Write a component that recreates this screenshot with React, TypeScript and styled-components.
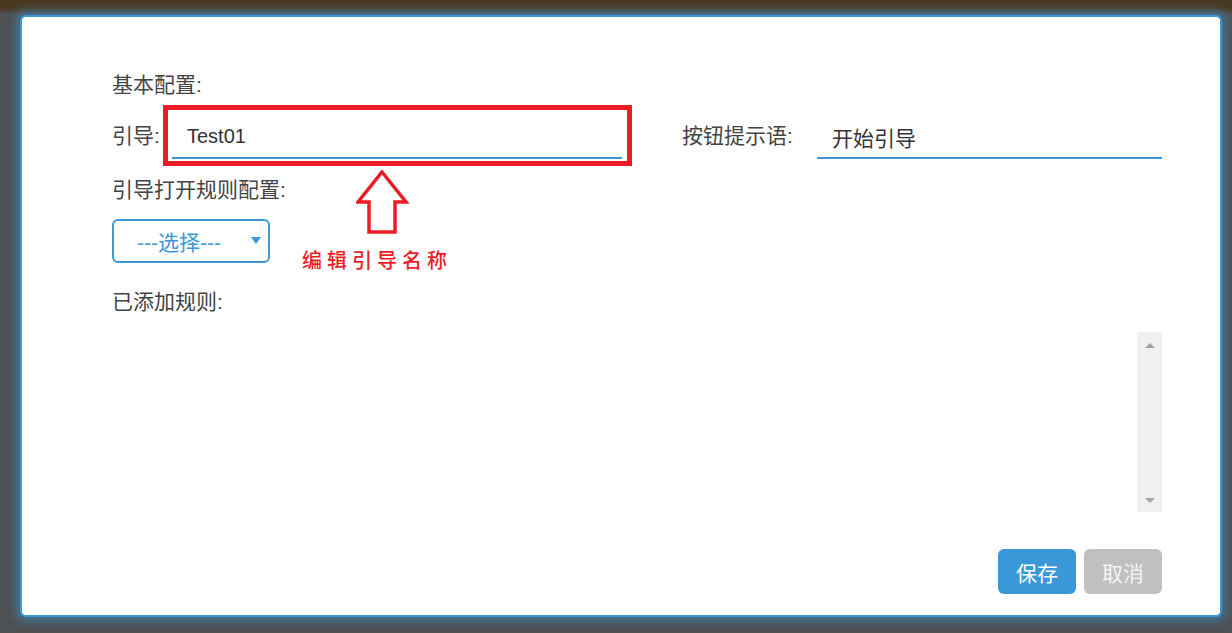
import React from "react";
import styled, { createGlobalStyle } from "styled-components";

const blue = "#3a98d9";
const red = "#ed1c24";

const GlobalStyle = createGlobalStyle`
  html, body {
    margin: 0;
    height: 633px;
    overflow: hidden;
  }
  body {
    padding: 15px 10px 0 20px;
    box-sizing: border-box;
    background: linear-gradient(#4a3921 0, #4a3921 8px, #4e5052 14px, #4e5052 100%);
    font-family: "Liberation Sans", "Noto Sans CJK SC", sans-serif;
  }
`;

const Modal = styled.div`
  position: relative;
  box-sizing: border-box;
  height: 602px;
  border: 2px solid ${blue};
  border-radius: 6px;
  background: #fff;
  box-shadow: 0 0 10px 5px rgba(58, 152, 217, 0.45);
  padding: 53px 58px 21px 90px;
  display: flex;
  flex-direction: column;
  color: #444;
  font-size: 21px;
`;

const Label = styled.div<{ $top?: number; $width?: number }>`
  line-height: 30px;
  margin-top: ${(p) => p.$top ?? 0}px;
  width: ${(p) => (p.$width ? `${p.$width}px` : "auto")};
  flex-shrink: 0;
  white-space: nowrap;
`;

const Row = styled.div`
  display: flex;
  align-items: center;
  height: 61px;
  margin-top: 5px;
`;

const Highlight = styled.div`
  box-sizing: border-box;
  width: 469px;
  height: 61px;
  border: 5px solid ${red};
  padding: 6px 5px 2px 4px;
`;

const Input = styled.div<{ $gap?: number; $size?: number }>`
  box-sizing: border-box;
  height: 43px;
  margin-top: ${(p) => p.$gap ?? 0}px;
  border-bottom: 2px solid ${blue};
  padding-left: 15px;
  display: flex;
  align-items: center;
  font-size: ${(p) => p.$size ?? 21}px;
  color: #333;
`;

const RightGroup = styled.div`
  display: flex;
  align-items: center;
  flex: 1;
  margin-left: 50px;
`;

const Grow = styled.div`
  flex: 1;
`;

const Select = styled.div`
  box-sizing: border-box;
  position: relative;
  width: 158px;
  height: 44px;
  margin-top: 14px;
  border: 2px solid ${blue};
  border-radius: 6px;
  color: ${blue};
  display: flex;
  align-items: center;
  justify-content: center;
  padding-right: 24px;
  font-size: 21px;
`;

const Caret = styled.span`
  position: absolute;
  right: 7px;
  top: 16px;
  width: 0;
  height: 0;
  border-left: 5px solid transparent;
  border-right: 5px solid transparent;
  border-top: 7px solid ${blue};
`;

const RuleList = styled.div`
  display: flex;
  height: 180px;
  margin-top: 15px;
`;

const ScrollTrack = styled.div`
  width: 25px;
  background: #f0f0f0;
  display: flex;
  flex-direction: column;
  justify-content: space-between;
  align-items: center;
  padding: 11px 0 9px;
  box-sizing: border-box;
`;

const ScrollArrow = styled.span<{ $down?: boolean }>`
  width: 0;
  height: 0;
  border-left: 5.5px solid transparent;
  border-right: 5.5px solid transparent;
  ${(p) =>
    p.$down
      ? `border-top: 5px solid #a3a3a3;`
      : `border-bottom: 5px solid #a3a3a3;`}
`;

const Footer = styled.div`
  display: flex;
  justify-content: flex-end;
  gap: 8px;
  margin-top: 37px;
`;

const Button = styled.button<{ $primary?: boolean }>`
  width: 78px;
  height: 45px;
  border: none;
  border-radius: 6px;
  font-family: "Liberation Sans", "Noto Sans CJK SC", sans-serif;
  font-size: 21px;
  color: ${(p) => (p.$primary ? "#fff" : "#f4f4f4")};
  background: ${(p) => (p.$primary ? blue : "#c0c0c0")};
  padding: 0;
`;

const ArrowMark = styled.svg`
  position: absolute;
  left: 334px;
  top: 153px;
`;

const Note = styled.div`
  position: absolute;
  left: 280px;
  top: 230px;
  font-size: 20px;
  line-height: 26px;
  letter-spacing: 5px;
  font-weight: 500;
  color: ${red};
  font-family: "Noto Sans CJK SC", sans-serif;
`;

export default function App() {
  return (
    <>
      <GlobalStyle />
      <Modal>
        <Label>基本配置:</Label>
        <Row>
          <Label $width={51}>引导:</Label>
          <Highlight>
            <Input $size={20}>Test01</Input>
          </Highlight>
          <RightGroup>
            <Label $width={135}>按钮提示语:</Label>
            <Grow>
              <Input $gap={4}>开始引导</Input>
            </Grow>
          </RightGroup>
        </Row>
        <Label $top={9}>引导打开规则配置:</Label>
        <Select>
          ---选择---
          <Caret />
        </Select>
        <Label $top={24}>已添加规则:</Label>
        <RuleList>
          <Grow />
          <ScrollTrack>
            <ScrollArrow />
            <ScrollArrow $down />
          </ScrollTrack>
        </RuleList>
        <Footer>
          <Button $primary>保存</Button>
          <Button>取消</Button>
        </Footer>

        <ArrowMark width="54" height="66" viewBox="0 0 54 66">
          <polygon
            points="26,2 50,32 39,32 39,62 13,62 13,32 2,32"
            fill="none"
            stroke={red}
            strokeWidth="3.5"
            strokeLinejoin="miter"
          />
        </ArrowMark>
        <Note>编辑引导名称</Note>
      </Modal>
    </>
  );
}
